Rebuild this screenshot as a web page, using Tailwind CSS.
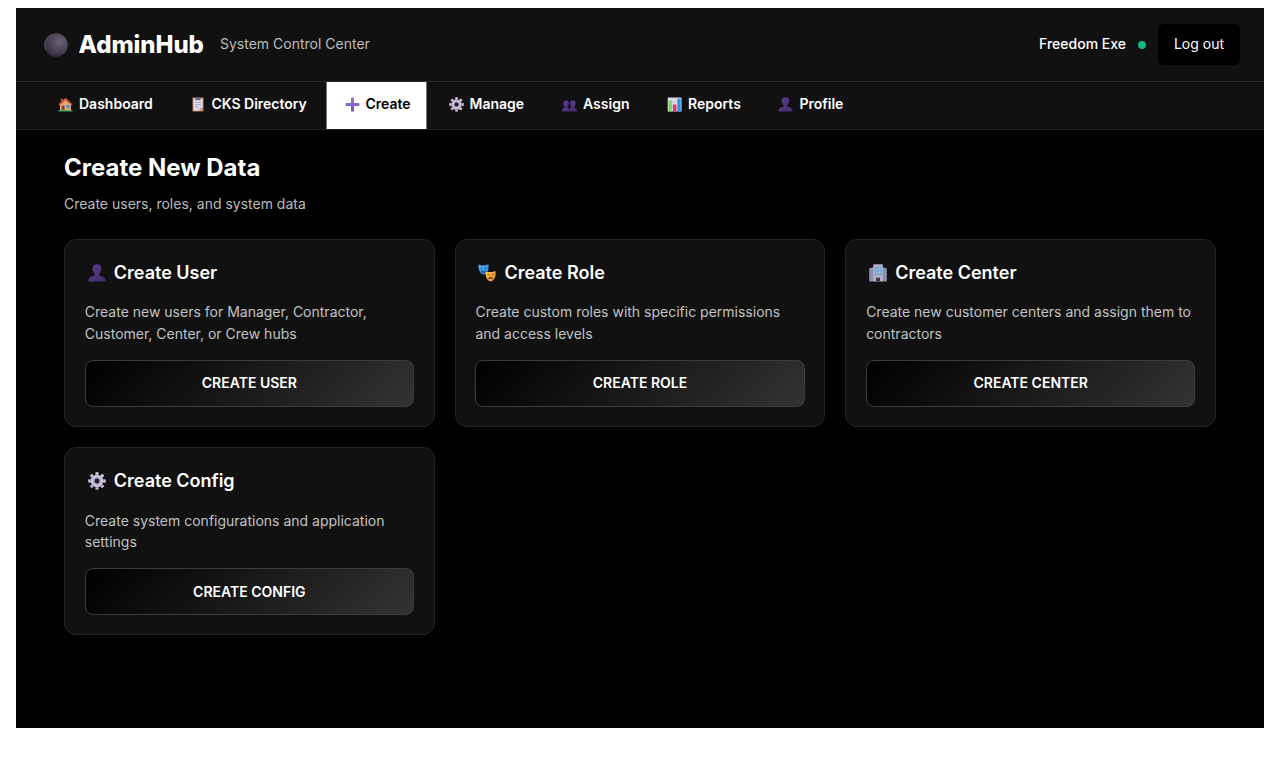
<!DOCTYPE html>
<html lang="en">
<head>
<meta charset="utf-8">
<title>AdminHub</title>
<script src="https://cdn.jsdelivr.net/npm/@tailwindcss/browser@4"></script>
</head>
<body class="bg-white h-[768px] overflow-hidden pl-4 pt-2 font-['Inter',sans-serif] text-white text-sm">
<svg class="absolute w-0 h-0">
  <defs>
    <linearGradient id="pg" x1="0" y1="0" x2="1" y2="1"><stop offset="0" stop-color="#5f3f92"/><stop offset="1" stop-color="#432969"/></linearGradient>
    <radialGradient id="moon" cx=".65" cy=".35" r=".7"><stop offset="0" stop-color="#6a6175"/><stop offset=".6" stop-color="#4a4256"/><stop offset="1" stop-color="#352c42"/></radialGradient>
    <linearGradient id="plus" x1="0" y1="0" x2="0" y2="1"><stop offset="0" stop-color="#9a78d2"/><stop offset="1" stop-color="#7650c4"/></linearGradient>
    <linearGradient id="blue" x1="0" y1="0" x2="1" y2="1"><stop offset="0" stop-color="#5cb5f5"/><stop offset="1" stop-color="#287fd0"/></linearGradient>
    <linearGradient id="gold" x1="0" y1="0" x2="1" y2="1"><stop offset="0" stop-color="#ffc94f"/><stop offset="1" stop-color="#ef8b35"/></linearGradient>
    <linearGradient id="gearg" x1="0" y1="0" x2="0" y2="1"><stop offset="0" stop-color="#ded6ea"/><stop offset="1" stop-color="#b6a9c9"/></linearGradient>
  </defs>
  <symbol id="user" viewBox="0 0 18 18"><path fill="url(#pg)" d="M9 0.3c3 0 4.300 1.500 4.200 3.700.7.3.6 2-.2 2.300-.3 1.700-1 2.900-1.900 3.600v1.500c2.500.5 5.800 1.400 6.400 4.600.1.900-.1 1.500-.8 1.500H1.300c-.7 0-.9-.6-.8-1.500.6-3.200 3.900-4.100 6.400-4.600V9.900C6 9.200 5.300 8 5 6.300c-.8-.3-.9-2-.2-2.300C4.700 1.800 6 .3 9 .3z"/></symbol>
  <symbol id="users" viewBox="0 0 14 14"><g fill="url(#pg)"><path d="M3.800 3.200c1.900 0 2.700 1 2.600 2.500.3.500.1 1.200-.2 1.400-.2 1-.7 1.600-1 2v.8c1 .2 1.700.5 1.700 1.800V13.500H.7c-.5 0-.6-.5-.5-1.200.3-1.500 1.300-2.100 2.300-2.400v-.8c-.4-.4-.9-1-1-2-.4-.2-.5-1-.2-1.400-.1-1.500.6-2.500 2.500-2.500z"/><path d="M10.200 3.200c1.900 0 2.600 1 2.500 2.500.3.400.2 1.200-.2 1.400-.1 1-.6 1.600-1 2v.8c1 .3 2 .9 2.300 2.400.1.700 0 1.200-.5 1.200H7.100v-1.800c0-1.300.7-1.600 1.700-1.800v-.8c-.3-.4-.8-1-1-2-.3-.2-.5-.9-.2-1.400-.1-1.500.7-2.500 2.600-2.500z"/></g></symbol>
  <symbol id="gear" viewBox="0 0 18 18"><g fill="url(#gearg)"><path d="M7.300 2.800 7.600.2h2.800l.3 2.600zM7.300 15.200l.3 2.600h2.800l.3-2.600zM2.800 7.300.2 7.600v2.800l2.600.3zM15.200 7.300l2.600.3v2.800l-2.600.3z"/><path d="M7.300 2.800 7.600.2h2.800l.3 2.600zM7.300 15.200l.3 2.600h2.800l.3-2.600zM2.800 7.300.2 7.600v2.800l2.600.3zM15.200 7.300l2.600.3v2.800l-2.600.3z" transform="rotate(45 9 9)"/></g><circle cx="9" cy="9" r="6.200" fill="#cdc3dc"/><circle cx="9" cy="9" r="3.600" fill="#a697bb"/><circle cx="9" cy="9" r="2.400" fill="#211a2a"/></symbol>
</svg>

<div class="w-[1248px] h-[720px] bg-black">
  <header class="h-[74px] bg-[#111] border-b border-[#272727] flex items-center justify-between pl-7 pr-6">
    <div class="flex items-center">
      <svg class="w-6 h-6" viewBox="0 0 24 24"><circle cx="12" cy="12" r="11.800" fill="url(#moon)"/><path d="M2 17A11 11 0 0 1 7 2" fill="none" stroke="#81798b" stroke-width=".7" opacity=".65"/><path d="M4 18c3 4 9 6 14 3" fill="none" stroke="#33293f" stroke-width="2" opacity=".5"/></svg>
      <h1 class="ml-[10.5px] w-[141.5px] text-2xl leading-[30px] font-extrabold tracking-[-0.06px] whitespace-nowrap">AdminHub</h1>
      <span class="pb-[2px] text-[#bcbcbc] whitespace-nowrap">System Control Center</span>
    </div>
    <div class="flex items-center">
      <span class="pb-[2px] font-medium">Freedom Exe</span>
      <span class="ml-3 w-2 h-2 rounded-full bg-[#10b981]"></span>
      <button class="ml-3 w-[82px] h-[41px] pb-[2px] rounded-md bg-black text-sm">Log out</button>
    </div>
  </header>

  <nav class="h-12 bg-[#111] border-b border-[#202020] flex pl-6 font-semibold whitespace-nowrap">
    <a class="w-[133px] pl-[18px] pb-[3px] flex items-center gap-[6px]">
      <svg class="w-[15px] h-[15px]" viewBox="0 0 15 15"><path d="M2.800 1.500h2v4h-2z" fill="#b9443b"/><path d="M2 7l5.600-5L13 7v6.500H2z" fill="#e8a36e"/><path d="M7.600.8 14.500 7.200l-1 1.200-6-5.200-6 5.200-1-1.200z" fill="#d85a3c"/><path d="M3.600 8.500h3v5h-3z" fill="#8e4a3b"/><path d="M8.200 8h3.500v3H8.200z" fill="#3d9be0"/><path d="M.5 13.200h14v1.200H.5z" fill="#3fc66d"/></svg>
      <span>Dashboard</span></a>
    <a class="w-[153px] pl-[17.4px] pb-[3px] flex items-center gap-[6px]">
      <svg class="w-[15px] h-[15px]" viewBox="0 0 15 15"><rect x="2.500" y=".5" width="11" height="14" rx=".8" fill="#c98662"/><path d="M3.500 1.500h9v9l-3 3h-6z" fill="#e2dcef"/><path d="m12.500 10.500-3 3v-3z" fill="#b5a4cd"/><rect x="5.300" y=".4" width="5.400" height="2.800" rx=".7" fill="#70677e"/><path d="M5 5.500h6M5 7.700h6M5 10h3.500" stroke="#a69bb9" stroke-width=".9"/></svg>
      <span>CKS Directory</span></a>
    <a class="w-[101px] pl-[17.5px] pb-[3px] h-[47px] bg-white border-x border-[#777] text-black flex items-center gap-[6px]">
      <svg class="w-[15px] h-[15px]" viewBox="0 0 15 15"><path d="M6.500.6h2q.5 0 .5.500V6h4.900q.5 0 .5.500v2q0 .5-.5.500H9v4.900q0 .5-.5.500h-2q-.5 0-.5-.5V9H1.100q-.5 0-.5-.5v-2q0-.5.500-.5H6V1.100q0-.5.500-.5z" fill="url(#plus)"/></svg>
      <span>Create</span></a>
    <a class="w-[114px] pl-[21.5px] pb-[2px] flex items-center gap-[6px]"><svg class="w-[15px] h-[15px]"><use href="#gear"/></svg><span class="pb-px">Manage</span></a>
    <a class="w-[104px] pl-[21px] pb-[3px] flex items-center gap-[6px]"><svg class="w-[15px] h-[15px]"><use href="#users"/></svg><span>Assign</span></a>
    <a class="w-[113px] pl-[22px] pb-[3px] flex items-center gap-[6px]">
      <svg class="w-[15px] h-[15px]" viewBox="0 0 15 15"><rect x=".7" y=".5" width="13.800" height="14" rx=".6" fill="#ded7e9"/><path d="M.7 5h13.800M.7 9.500h13.800" stroke="#bfb4ce" stroke-width=".5"/><path d="M1.500 3.500h3.300v11H1.500z" fill="#7fd35c"/><path d="M5.900 7.500h3.500v7H5.900z" fill="#dd386d"/><path d="M10.400 1.700h3.300v12.800h-3.300z" fill="#2d91df"/></svg>
      <span>Reports</span></a>
    <a class="pl-[20.4px] pb-[3px] flex items-center gap-[6px]"><svg class="w-[15px] h-[15px]"><use href="#user"/></svg><span>Profile</span></a>
  </nav>

  <main class="px-12 pt-[23px]">
    <h2 class="text-2xl leading-[30px] font-bold">Create New Data</h2>
    <p class="mt-[10px] leading-[22px] text-[#bcbcbc]">Create users, roles, and system data</p>
    <div class="mt-[23.5px] grid grid-cols-3 gap-x-5 gap-y-[19.5px]">
      <section class="h-[188.5px] rounded-xl bg-[#111] border border-[#242424] px-[19.8px] pt-[21.5px]">
        <h3 class="flex items-center text-lg leading-[23px] font-semibold"><svg class="ml-[3px] mr-2 w-[18px] h-[18px]"><use href="#user"/></svg>Create User</h3>
        <p class="mt-[17px] leading-[21.500px] text-[#c2c2c2] whitespace-nowrap">Create new users for Manager, Contractor,<br>Customer, Center, or Crew hubs</p>
        <button class="mt-[15.5px] w-full h-[47px] rounded-lg border border-[#3c3c3c] bg-[linear-gradient(135deg,#000,#333)] font-semibold">CREATE USER</button>
      </section>
      <section class="h-[188.5px] rounded-xl bg-[#111] border border-[#242424] px-[19.8px] pt-[21.5px]">
        <h3 class="flex items-center text-lg leading-[23px] font-semibold"><svg class="ml-[3px] mr-2 w-[18px] h-[18px]" viewBox="0 0 18 18"><path d="M.5.5c2.500 1.200 6.500 1.200 10 .1.500 4.700-.7 8.800-4.500 10.100C2 10 .2 5.700.5.500z" fill="url(#blue)"/><path d="M2.300 4.300q1-.8 2 .1M6.600 4.300q1-.8 2 .1M3 6.700q2.600 1.800 5 0-.4 2-2.400 2T3 6.700z" fill="#184f91" stroke="#184f91" stroke-width=".6"/><path d="M7.500 7.400c3 1.100 6.500.9 9.900-.5.700 4.800-.5 9.200-4.500 10.700-3.800-1-5.600-5-5.400-10.200z" fill="url(#gold)"/><path d="M9.300 10.800q1.100-1 2.100 0M13.600 10.600q1-1 2.100-.1M10.300 14.800q2.200-3.600 4.700-.2-2.400-.7-4.700.2z" fill="#75401f" stroke="#75401f" stroke-width=".7"/></svg>Create Role</h3>
        <p class="mt-[17px] leading-[21.500px] text-[#c2c2c2] whitespace-nowrap">Create custom roles with specific permissions<br>and access levels</p>
        <button class="mt-[15.5px] w-full h-[47px] rounded-lg border border-[#3c3c3c] bg-[linear-gradient(135deg,#000,#333)] font-semibold">CREATE ROLE</button>
      </section>
      <section class="h-[188.5px] rounded-xl bg-[#111] border border-[#242424] px-[19.8px] pt-[21.5px]">
        <h3 class="flex items-center text-lg leading-[23px] font-semibold"><svg class="ml-[3px] mr-2 w-[18px] h-[18px]" viewBox="0 0 18 18"><path d="M.2 4.200 5 3v14.500H.2zM13 3l4.800 1.200v13.300H13z" fill="#968ba4"/><rect x="4.200" y=".3" width="9.600" height="17.200" rx=".8" fill="#b8adc3"/><g fill="#42b3e8"><path d="M5.700 2.500h1.700v2H5.700zM8.200 2.500h1.700v2H8.200zM10.700 2.500h1.700v2h-1.700zM5.700 5.800h1.700v2H5.700zM8.200 5.800h1.700v2H8.200zM10.700 5.800h1.700v2h-1.700zM5.700 9.100h1.700v2H5.700zM8.200 9.100h1.700v2H8.200zM10.700 9.100h1.700v2h-1.700zM1.400 6h1.300v2H1.400zM1.400 9.500h1.300v2H1.400zM1.400 13h1.300v2H1.400zM15.200 6h1.300v2h-1.300zM15.200 9.500h1.300v2h-1.300zM15.200 13h1.300v2h-1.300z"/></g><path d="M7 13.700h4v3.800H7z" fill="#43384f"/></svg>Create Center</h3>
        <p class="mt-[17px] leading-[21.500px] text-[#c2c2c2] whitespace-nowrap">Create new customer centers and assign them to<br>contractors</p>
        <button class="mt-[15.5px] w-full h-[47px] rounded-lg border border-[#3c3c3c] bg-[linear-gradient(135deg,#000,#333)] font-semibold">CREATE CENTER</button>
      </section>
      <section class="h-[188.5px] rounded-xl bg-[#111] border border-[#242424] px-[19.8px] pt-[21.5px]">
        <h3 class="flex items-center text-lg leading-[23px] font-semibold"><svg class="ml-[3px] mr-2 w-[18px] h-[18px]"><use href="#gear"/></svg>Create Config</h3>
        <p class="mt-[17.5px] leading-[21.500px] text-[#c2c2c2] whitespace-nowrap">Create system configurations and application<br>settings</p>
        <button class="mt-[15.5px] w-full h-[47px] rounded-lg border border-[#3c3c3c] bg-[linear-gradient(135deg,#000,#333)] font-semibold">CREATE CONFIG</button>
      </section>
    </div>
  </main>
</div>
</body>
</html>
